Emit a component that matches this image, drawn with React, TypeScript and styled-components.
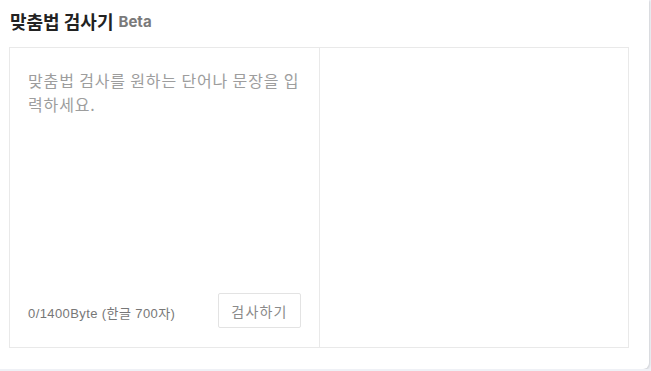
import React from "react";
import styled, { createGlobalStyle } from "styled-components";

const GlobalStyle = createGlobalStyle`
  html, body {
    margin: 0;
    padding: 0;
    background: #eff1f6;
  }
  * {
    box-sizing: border-box;
  }
`;

const KR = `"Noto Sans CJK KR", "Noto Sans", sans-serif`;
const LATIN_KR = `"Liberation Sans", "Noto Sans CJK KR", sans-serif`;

export default function App() {
  return (
    <>
      <GlobalStyle />
      <Card>
        <Header>
          <Title>맞춤법 검사기</Title>
          <Badge>Beta</Badge>
        </Header>
        <Board>
          <InputPane>
            <TextInput placeholder="맞춤법 검사를 원하는 단어나 문장을 입력하세요." />
            <Footer>
              <Counter>0/1400Byte (한글 700자)</Counter>
              <CheckButton type="button">검사하기</CheckButton>
            </Footer>
          </InputPane>
          <ResultPane />
        </Board>
      </Card>
    </>
  );
}

const Card = styled.div`
  width: 649px;
  height: 369px;
  background: #fff;
  border-radius: 0 0 6px 0;
  box-shadow: 1px 1px 2px rgba(0, 0, 0, 0.12);
  padding: 0 20px 0 9px;
`;

const Header = styled.div`
  display: flex;
  align-items: center;
  gap: 5px;
  height: 47px;
  padding: 0 0 6px 1px;
`;

const Title = styled.h1`
  margin: 0;
  font-family: ${KR};
  font-size: 18px;
  font-weight: 700;
  color: #222;
`;

const Badge = styled.span`
  font-family: Inter, "Noto Sans", sans-serif;
  font-size: 15px;
  font-weight: 700;
  color: #7a7a7a;
  margin-top: 2px;
`;

const Board = styled.div`
  display: grid;
  grid-template-columns: 310px 1fr;
  height: 301px;
  border: 1px solid #e9e9e9;
`;

const InputPane = styled.div`
  display: flex;
  flex-direction: column;
  padding: 20px 18px 19px 18px;
  border-right: 1px solid #e9e9e9;
`;

const TextInput = styled.textarea`
  flex: 1;
  width: 100%;
  border: none;
  outline: none;
  resize: none;
  padding: 0;
  font-family: ${KR};
  font-size: 16px;
  line-height: 24px;
  letter-spacing: 0.85px;
  color: #555;
  background: transparent;

  &::placeholder {
    color: #9d9d9d;
  }
`;

const Footer = styled.div`
  display: flex;
  align-items: center;
  justify-content: space-between;
`;

const Counter = styled.span`
  font-family: ${LATIN_KR};
  font-size: 13px;
  letter-spacing: 0.4px;
  color: #777;
  margin-top: 4px;
`;

const CheckButton = styled.button`
  width: 83px;
  height: 35px;
  border: 1px solid #e3e3e3;
  border-radius: 2px;
  background: #fff;
  font-family: ${KR};
  font-size: 14px;
  letter-spacing: 1.2px;
  color: #8a8a8a;
  cursor: pointer;
`;

const ResultPane = styled.div`
  background: #fff;
`;
